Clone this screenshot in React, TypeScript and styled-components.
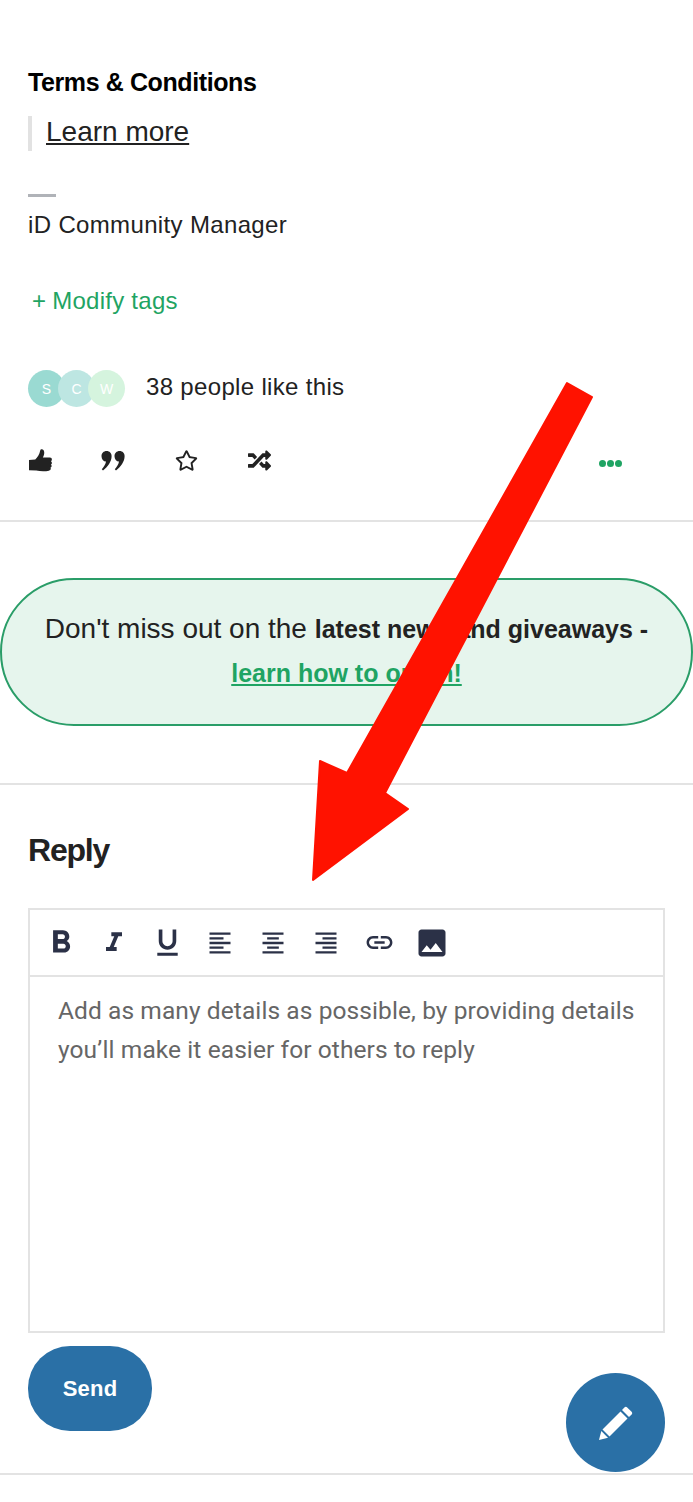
import styled, { createGlobalStyle } from 'styled-components';
import { FaRegStar, FaRandom } from 'react-icons/fa';
import {
  MdFormatBold,
  MdFormatItalic,
  MdFormatUnderlined,
  MdFormatAlignLeft,
  MdFormatAlignCenter,
  MdFormatAlignRight,
  MdLink,
  MdImage,
} from 'react-icons/md';

const GlobalStyle = createGlobalStyle`
  html, body {
    margin: 0;
    padding: 0;
    background: #fff;
    font-family: "Liberation Sans", Arial, sans-serif;
    color: #222;
  }
  * { box-sizing: border-box; }
`;

const likers = [
  { letter: 'S', color: '#9adad2' },
  { letter: 'C', color: '#bde6e2' },
  { letter: 'W', color: '#d5f4de' },
];

const tools = [
  { Icon: MdFormatBold, size: 38 },
  { Icon: MdFormatItalic, size: 32 },
  { Icon: MdFormatUnderlined, size: 35 },
  { Icon: MdFormatAlignLeft, size: 28 },
  { Icon: MdFormatAlignCenter, size: 28 },
  { Icon: MdFormatAlignRight, size: 28 },
  { Icon: MdLink, size: 31 },
  { Icon: MdImage, size: 36 },
];

const ThumbIcon = () => (
  <svg width="23" height="23" viewBox="0 0 22 22" fill="currentColor">
    <path d="M0 10.5 6 10C8 8.2 10 5.5 10.8 1.2 11 0 13.2 0 14 1.2 15.2 3.2 14.4 6 13.2 8.2L20 8.2C22.2 8.2 22.4 11 21 11.6 22.2 12.4 22.2 14.2 21 14.8 22 15.8 21.8 17.4 20.6 17.8 21.2 19 20.6 20.6 19 20.8 15.6 21.6 10.6 21.6 7 20.6L0 20.4Z" />
  </svg>
);

const QuoteIcon = () => (
  <svg width="24" height="22" viewBox="0 0 24 22" fill="currentColor">
    <path d="M5.6 1C8.6 1 10.6 3.2 10.6 6.2 10.6 11.6 6.8 16.6 2 20.6L.8 19.2C3.2 16.6 4.6 14.2 5 11.6 2.4 11.4.5 9.2.5 6.2.5 3.2 2.6 1 5.6 1Z" />
    <path d="M18.6 1C21.6 1 23.6 3.2 23.6 6.2 23.6 11.6 19.8 16.6 15 20.6L13.8 19.2C16.2 16.6 17.6 14.2 18 11.6 15.4 11.4 13.5 9.2 13.5 6.2 13.5 3.2 15.6 1 18.6 1Z" />
  </svg>
);

const PencilIcon = () => (
  <svg width="34" height="34" viewBox="0 0 34 34" fill="currentColor">
    <polygon points="3.5,23.5 21.5,5.5 28.5,12.5 10.5,30.5" />
    <polygon points="2.3,25 9,31.7 0,34" />
    <path d="M23 4 25.4 1.4C26.2.6 27.4.6 28.2 1.4L32.6 5.8C33.4 6.6 33.4 7.8 32.6 8.6L30 11Z" />
  </svg>
);

export default function App() {
  return (
    <>
      <GlobalStyle />
      <Page>
        <PostSection>
          <TermsTitle>Terms &amp; Conditions</TermsTitle>
          <Quote>
            <a href="#learn">Learn more</a>
          </Quote>
          <ShortRule />
          <Signature>iD Community Manager</Signature>
          <ModifyTags>
            <span>+</span>Modify tags
          </ModifyTags>
          <LikesRow>
            <Avatars>
              {likers.map((liker) => (
                <Avatar key={liker.letter} $color={liker.color}>
                  {liker.letter}
                </Avatar>
              ))}
            </Avatars>
            <LikesText>38 people like this</LikesText>
          </LikesRow>
          <ActionsRow>
            <ActionIcon>
              <ThumbIcon />
            </ActionIcon>
            <ActionIcon>
              <QuoteIcon />
            </ActionIcon>
            <ActionIcon>
              <FaRegStar size={23} />
            </ActionIcon>
            <ActionIcon>
              <FaRandom size={23} />
            </ActionIcon>
            <MoreDots>
              <i />
              <i />
              <i />
            </MoreDots>
          </ActionsRow>
        </PostSection>

        <BannerSection>
          <Banner>
            <p>
              Don't miss out on the <strong>latest news and giveaways -</strong>
            </p>
            <p>
              <a href="#optin">learn how to opt in!</a>
            </p>
          </Banner>
        </BannerSection>

        <ReplySection>
          <ReplyTitle>Reply</ReplyTitle>
          <Editor>
            <Toolbar>
              {tools.map(({ Icon, size }, i) => (
                <ToolButton key={i}>
                  <Icon size={size} />
                </ToolButton>
              ))}
            </Toolbar>
            <Placeholder>
              Add as many details as possible, by providing details you’ll make it easier for others to reply
            </Placeholder>
          </Editor>
          <SendButton>Send</SendButton>
        </ReplySection>

        <Fab>
          <PencilIcon />
        </Fab>

        <ArrowOverlay viewBox="0 0 693 1502" width="693" height="1502">
          <polygon
            points="567,383 592,397 385,793 408,809 313,880 320,761 347,773"
            fill="#ff1200"
            stroke="#ff1200"
            strokeWidth="2"
            strokeLinejoin="round"
          />
        </ArrowOverlay>
      </Page>
    </>
  );
}

const Page = styled.div`
  position: relative;
  width: 693px;
  height: 1502px;
  overflow: hidden;
`;

const PostSection = styled.section`
  height: 522px;
  padding: 66px 28px 0;
  border-bottom: 2px solid #e3e3e3;
`;

const TermsTitle = styled.h3`
  margin: 0;
  font-size: 25px;
  line-height: 33px;
  font-weight: 700;
  color: #000;
  letter-spacing: -0.4px;
`;

const Quote = styled.blockquote`
  margin: 17px 0 0;
  height: 35px;
  padding-left: 14px;
  border-left: 4px solid #e2e2e2;
  font-size: 28px;
  line-height: 32px;

  a {
    color: #222;
    text-decoration: underline;
  }
`;

const ShortRule = styled.div`
  width: 28px;
  height: 3px;
  margin-top: 43px;
  background: #b0b3b8;
`;

const Signature = styled.div`
  margin-top: 13px;
  font-size: 24px;
  line-height: 30px;
  letter-spacing: 0.35px;
`;

const ModifyTags = styled.div`
  margin-top: 46px;
  padding-left: 4px;
  font-size: 24px;
  line-height: 30px;
  letter-spacing: 0.25px;
  color: #1fa463;

  span {
    margin-right: 6px;
  }
`;

const LikesRow = styled.div`
  display: flex;
  align-items: center;
  margin-top: 54px;
`;

const Avatars = styled.div`
  display: flex;
  width: 118px;
`;

const Avatar = styled.div<{ $color: string }>`
  width: 37px;
  height: 37px;
  margin-right: -7px;
  border-radius: 50%;
  background: ${(p) => p.$color};
  color: #fff;
  font-size: 14px;
  display: flex;
  align-items: center;
  justify-content: center;
`;

const LikesText = styled.span`
  padding-bottom: 4px;
  font-size: 24px;
  line-height: 30px;
  letter-spacing: 0.33px;
`;

const ActionsRow = styled.div`
  display: flex;
  align-items: center;
  gap: 49px;
  margin-top: 42px;
`;

const ActionIcon = styled.span`
  display: flex;
  width: 24px;
  justify-content: center;
  color: #222;
`;

const MoreDots = styled.span`
  display: flex;
  gap: 1px;
  margin: 6px 43px 0 auto;

  i {
    width: 7px;
    height: 7px;
    border-radius: 50%;
    background: #1fa463;
  }
`;

const BannerSection = styled.section`
  height: 263px;
  padding-top: 56px;
  border-bottom: 2px solid #e3e3e3;
`;

const Banner = styled.div`
  height: 148px;
  border: 2px solid #2a9d68;
  border-radius: 74px;
  background: #e6f5ed;
  padding-top: 27px;
  text-align: center;
  font-size: 28px;
  line-height: 44px;

  p {
    margin: 0;
  }

  strong {
    font-size: 25px;
  }

  a {
    color: #1fa463;
    font-size: 25px;
    font-weight: 700;
    text-decoration: underline;
  }
`;

const ReplySection = styled.section`
  height: 690px;
  padding: 43px 28px 0;
  border-bottom: 2px solid #e3e3e3;
`;

const ReplyTitle = styled.h2`
  margin: 0;
  font-size: 32px;
  line-height: 44px;
  font-weight: 700;
  letter-spacing: -1.2px;
`;

const Editor = styled.div`
  margin-top: 36px;
  height: 425px;
  border: 2px solid #e3e3e3;
`;

const Toolbar = styled.div`
  display: flex;
  align-items: center;
  height: 67px;
  padding-left: 16px;
  gap: 23px;
  border-bottom: 2px solid #e3e3e3;
`;

const ToolButton = styled.span`
  display: flex;
  width: 30px;
  justify-content: center;
  color: #2b3147;

  svg {
    flex-shrink: 0;
  }
`;

const Placeholder = styled.div`
  padding: 14px 20px 15px 28px;
  font-family: Roboto, sans-serif;
  font-size: 24.5px;
  line-height: 39px;
  letter-spacing: 0.09px;
  color: #666;
`;

const SendButton = styled.button`
  display: block;
  width: 124px;
  height: 85px;
  margin-top: 13px;
  border: 0;
  border-radius: 42px;
  background: #2a70a6;
  color: #fff;
  font-family: "Liberation Sans", Arial, sans-serif;
  font-size: 22px;
  font-weight: 700;
  letter-spacing: 0.2px;
`;

const Fab = styled.div`
  position: absolute;
  left: 566px;
  top: 1373px;
  width: 99px;
  height: 99px;
  border-radius: 50%;
  background: #2a70a6;
  color: #fff;
  display: flex;
  align-items: center;
  justify-content: center;
`;

const ArrowOverlay = styled.svg`
  position: absolute;
  left: 0;
  top: 0;
  pointer-events: none;
`;
